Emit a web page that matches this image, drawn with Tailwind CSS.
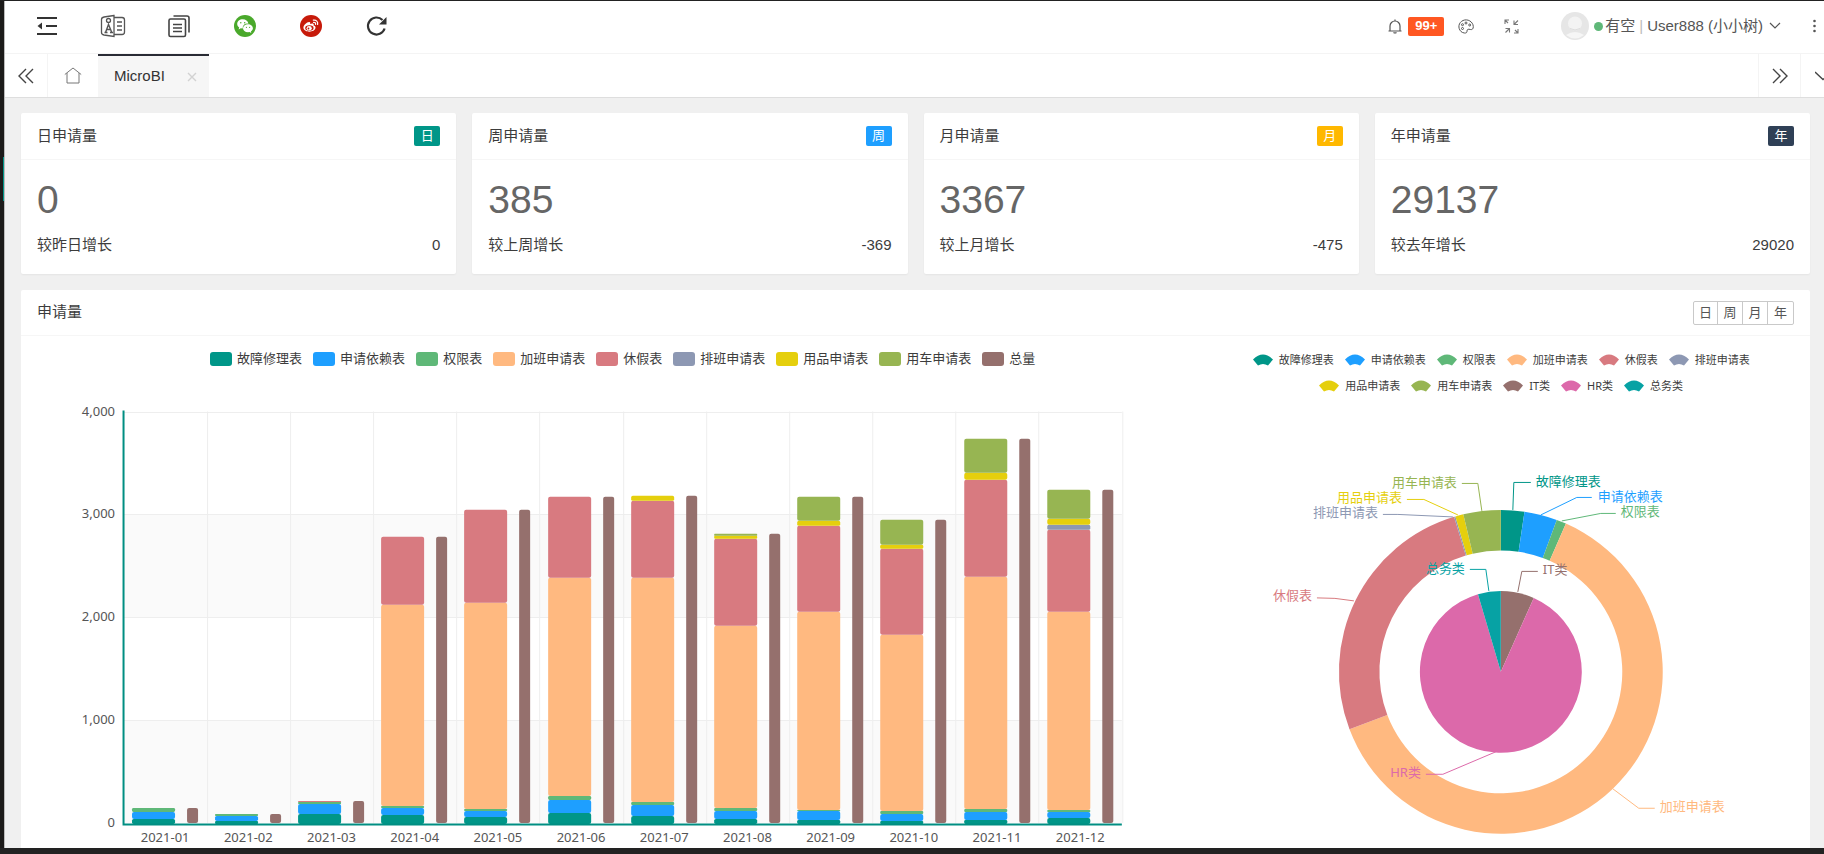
<!DOCTYPE html>
<html lang="zh-CN">
<head>
<meta charset="utf-8">
<title>MicroBI</title>
<script src="https://cdn.jsdelivr.net/npm/@tailwindcss/browser@4"></script>
</head>
<body class="flex h-screen overflow-hidden bg-[#222] pt-px pb-[6px] font-['Liberation_Sans','Noto_Sans_CJK_SC',sans-serif] text-[15px] text-[#3c3c3c]">
<aside class="relative w-1 shrink-0 bg-[#1c1b1a]"><div class="absolute top-[156px] right-0 h-11 w-px bg-[#009688]"></div></aside>
<div class="flex min-w-0 flex-1 flex-col overflow-hidden border-l border-[#bbb] bg-[#f0f0f0]">

  <header class="flex h-[52px] shrink-0 items-center justify-between bg-white pb-[2px]">
    <nav class="flex items-center pl-[9px] text-[#333]">
      <button class="flex w-[66px] justify-center" aria-label="收起菜单">
        <svg width="22" height="20" viewBox="0 0 22 20" fill="none" stroke="currentColor" stroke-width="2"><path d="M1 2h20M10 10h11M1 18h20"/><path d="M6 6.500v7L1.500 10z" fill="currentColor" stroke="none"/></svg>
      </button>
      <button class="flex w-[66px] justify-center text-[#555]" aria-label="通讯录">
        <svg width="26" height="24" viewBox="0 0 26 24" fill="none" stroke="currentColor" stroke-width="1.300"><path d="M14 1.500 4 3Q1.500 3.500 1.500 5.500v13Q1.500 20.500 4 21l10 1.500zM14 3.500h8q2.500 0 2.500 2.500v12q0 2.500-2.500 2.500h-8M17 8h5M17 12h5M17 16h5"/><circle cx="8.500" cy="6.500" r="2"/><path d="M4.500 18.500h3M10 18.500h3M5.500 18.500 8.500 10.500l3.300 8M6.500 15.500h4.500" stroke-width="1.400"/></svg>
      </button>
      <button class="flex w-[66px] justify-center text-[#444]" aria-label="文档">
        <svg width="24" height="24" viewBox="0 0 24 24" fill="none" stroke="currentColor" stroke-width="1.600"><rect x="2" y="5" width="16.500" height="17.500" rx="1.500"/><path d="M6.500 2H20q2 0 2 2v14.500M6 10.500h9M6 14h9M6 17.500h9"/></svg>
      </button>
      <button class="flex w-[66px] justify-center" aria-label="微信">
        <svg width="22" height="22" viewBox="0 0 22 22"><circle cx="11" cy="11" r="11" fill="#4aa92b"/><path d="M8.800 4.300c-3.200 0-5.600 2-5.600 4.700 0 1.500.8 2.700 2 3.600l-.6 1.800 2.200-1.100 1.900.3a4.500 4.500 0 0 1 5.700-4.900C14 6 11.600 4.300 8.800 4.300z" fill="#fff"/><path d="M14 9.300c-2.900 0-5 1.800-5 4s2.100 4 5 4l1.500-.2 1.800 1-.4-1.600c1.200-.8 2-1.900 2-3.200 0-2.200-2.200-4-4.900-4z" fill="#fff"/><g fill="#4aa92b"><circle cx="6.800" cy="7.800" r=".7"/><circle cx="10.700" cy="7.800" r=".7"/><circle cx="12.400" cy="12.300" r=".6"/><circle cx="15.600" cy="12.300" r=".6"/></g></svg>
      </button>
      <button class="flex w-[66px] justify-center" aria-label="微博">
        <svg width="22" height="22" viewBox="0 0 22 22"><circle cx="11" cy="11" r="11" fill="#c71a0a"/><path d="M9.300 7.100c1 .1 1.100.9.800 1.800 1.700-.7 3.500-.8 3.600.6 0 .4-.2.800-.1 1.100 1.100.3 2.200 1 1.900 2.500-.4 2.200-3.100 3.600-6.100 3.600-3.100 0-6-1.500-6-3.900 0-2.500 3.700-6 5.900-5.700z" fill="#fff"/><ellipse cx="9.400" cy="13" rx="4.200" ry="2.800" fill="#c71a0a"/><ellipse cx="9.200" cy="13.200" rx="2.600" ry="2.200" fill="#fff"/><circle cx="8.500" cy="13.500" r=".9" fill="#c71a0a"/><path d="M13.300 5.200c2.800-.6 5 1.500 4.300 4.300M13.600 7.300c1.300-.2 2.300.7 2 2" fill="none" stroke="#fff" stroke-width="1.200" stroke-linecap="round"/></svg>
      </button>
      <button class="flex w-[66px] justify-center" aria-label="刷新">
        <svg width="22" height="22" viewBox="0 0 22 22" fill="none" stroke="currentColor" stroke-width="2.200"><path d="M18.600 13.500A8.500 8.500 0 1 1 16.500 5"/><path d="M20.500 2v7.500h-7.500z" fill="currentColor" stroke="none"/></svg>
      </button>
    </nav>
    <div class="flex items-center text-[#555]">
      <button class="flex items-center gap-[6px]">
        <svg width="14" height="15" viewBox="0 0 14 15" fill="none" stroke="currentColor" stroke-width="1.200"><path d="M.5 12h13M2 12V7a5 5 0 0 1 10 0v5M7 2V.5M5.500 13.500q1.500 1 3 0"/></svg>
        <span class="flex h-[19px] w-9 items-center justify-center rounded-[2px] bg-[#ff5722] text-[13px] font-bold text-white">99+</span>
      </button>
      <button class="ml-[14px]" aria-label="主题">
        <svg width="16" height="15" viewBox="0 0 16 15" fill="none" stroke="currentColor" stroke-width="1"><path d="M3 12.500C-.5 9 .5 3.500 5 1.500c4.500-2 10 1 10.300 6 .2 2.500-1.500 3.500-3 3-2-.7-3.500-.2-3.300 1.700.1 1.300-.8 2-2.500 1.800-1.300-.1-2.500-.6-3.500-1.500z"/><circle cx="4.500" cy="9.500" r="1"/><circle cx="4.500" cy="5.700" r="1"/><circle cx="8" cy="4" r="1"/><circle cx="11.700" cy="6" r="1"/></svg>
      </button>
      <button class="ml-[30px]" aria-label="退出全屏">
        <svg width="15" height="15" viewBox="0 0 15 15" fill="none" stroke="#777" stroke-width="1.100"><path d="M1 5V1h4M10 1.500v4h4M14 1.500l-4 4M1.500 9.500h4v4M5.500 9.500l-4 4M14 10v4h-4M1 1l3 3M11 11l3 3"/></svg>
      </button>
      <button class="ml-[42px] flex items-center">
        <svg width="28" height="28" viewBox="0 0 28 28"><circle cx="14" cy="14" r="14" fill="#e6e6e6"/><circle cx="14" cy="11.500" r="7" fill="#f3f3f3"/><path d="M5 23q9-6 18 0-9 7-18 0z" fill="#f6f6f6"/><path d="M9 16.500q5 3 10 0" stroke="#dcdcdc" fill="none"/></svg>
        <span class="ml-[5px] size-[9px] rounded-full bg-[#5fb878]"></span>
        <span class="ml-[2px]">有空</span><span class="mx-1 text-[#bbb]">|</span><span>User888 (小小树)</span>
        <svg class="ml-[6px]" width="12" height="8" viewBox="0 0 12 8" fill="none" stroke="currentColor" stroke-width="1.200"><path d="m1 1 5 5 5-5"/></svg>
      </button>
      <button class="mr-2 ml-8" aria-label="更多">
        <svg width="3" height="14" viewBox="0 0 3 14" fill="currentColor"><circle cx="1.500" cy="2" r="1.300"/><circle cx="1.500" cy="7" r="1.300"/><circle cx="1.500" cy="12" r="1.300"/></svg>
      </button>
    </div>
  </header>

  <div class="flex h-[45px] shrink-0 border-t border-b border-t-[#f4f4f4] border-b-[#dedede] bg-white">
    <button class="flex w-[43px] items-center justify-center border-r border-[#f4f4f4] text-[#444]" aria-label="向左">
      <svg width="16" height="16" viewBox="0 0 16 16" fill="none" stroke="currentColor" stroke-width="1.400"><path d="M8 1 1 8l7 7M15 1 8 8l7 7"/></svg>
    </button>
    <button class="flex w-[50px] items-center justify-center text-[#777]" aria-label="首页">
      <svg width="18" height="17" viewBox="0 0 18 17" fill="none" stroke="currentColor" stroke-width="1"><path d="M.8 7.500 9 1l8.200 6.500M3 6v10h12V6"/></svg>
    </button>
    <div class="flex w-[111px] items-center justify-between border-t-2 border-[#292b34] bg-[#f6f6f6] pr-[12px] pl-4">
      <a href="#" class="text-[#333]">MicroBI</a>
      <button class="text-[#d2d2d2]" aria-label="关闭"><svg width="10" height="10" viewBox="0 0 10 10" stroke="currentColor" stroke-width="1.400"><path d="m1 1 8 8M9 1 1 9"/></svg></button>
    </div>
    <button class="ml-auto flex w-[43px] items-center justify-center border-x border-[#f4f4f4] text-[#444]" aria-label="向右">
      <svg width="16" height="16" viewBox="0 0 16 16" fill="none" stroke="currentColor" stroke-width="1.400"><path d="m1 1 7 7-7 7M8 1l7 7-7 7"/></svg>
    </button>
    <button class="flex w-[23px] items-center justify-end overflow-hidden text-[#444]" aria-label="标签操作">
      <svg width="9" height="10" viewBox="0 0 9 10" fill="none" stroke="currentColor" stroke-width="1.400"><path d="m0 1 8 7.500 1-1"/></svg>
    </button>
  </div>

  <main class="flex flex-col gap-4 pt-[15px] pr-[14px] pl-4">
    <section class="grid grid-cols-4 gap-4">
      <article class="rounded-[2px] bg-white shadow-[0_1px_2px_rgba(0,0,0,0.05)]">
        <div class="flex h-[47px] items-center justify-between border-b border-[#f6f6f6] px-4"><h2>日申请量</h2><span class="flex h-5 w-[26px] items-center justify-center rounded-[2px] bg-[#009688] text-[13px] text-white">日</span></div>
        <div class="px-4 pt-5 pb-4"><p class="text-[39px] leading-10 text-[#666]">0</p><p class="mt-3 flex h-[26px] items-center justify-between"><span>较昨日增长</span><span>0</span></p></div>
      </article>
      <article class="rounded-[2px] bg-white shadow-[0_1px_2px_rgba(0,0,0,0.05)]">
        <div class="flex h-[47px] items-center justify-between border-b border-[#f6f6f6] px-4"><h2>周申请量</h2><span class="flex h-5 w-[26px] items-center justify-center rounded-[2px] bg-[#1e9fff] text-[13px] text-white">周</span></div>
        <div class="px-4 pt-5 pb-4"><p class="text-[39px] leading-10 text-[#666]">385</p><p class="mt-3 flex h-[26px] items-center justify-between"><span>较上周增长</span><span>-369</span></p></div>
      </article>
      <article class="rounded-[2px] bg-white shadow-[0_1px_2px_rgba(0,0,0,0.05)]">
        <div class="flex h-[47px] items-center justify-between border-b border-[#f6f6f6] px-4"><h2>月申请量</h2><span class="flex h-5 w-[26px] items-center justify-center rounded-[2px] bg-[#ffb800] text-[13px] text-white">月</span></div>
        <div class="px-4 pt-5 pb-4"><p class="text-[39px] leading-10 text-[#666]">3367</p><p class="mt-3 flex h-[26px] items-center justify-between"><span>较上月增长</span><span>-475</span></p></div>
      </article>
      <article class="rounded-[2px] bg-white shadow-[0_1px_2px_rgba(0,0,0,0.05)]">
        <div class="flex h-[47px] items-center justify-between border-b border-[#f6f6f6] px-4"><h2>年申请量</h2><span class="flex h-5 w-[26px] items-center justify-center rounded-[2px] bg-[#2f4056] text-[13px] text-white">年</span></div>
        <div class="px-4 pt-5 pb-4"><p class="text-[39px] leading-10 text-[#666]">29137</p><p class="mt-3 flex h-[26px] items-center justify-between"><span>较去年增长</span><span>29020</span></p></div>
      </article>
    </section>

    <section class="rounded-[2px] bg-white">
      <div class="flex h-[46px] items-center justify-between border-b border-[#f6f6f6] px-4">
        <h2>申请量</h2>
        <div class="flex divide-x divide-[#c9c9c9] rounded-[2px] border border-[#c9c9c9] text-[13px] text-[#555]">
          <button class="h-[22px] w-6">日</button><button class="h-[22px] w-[25px]">周</button><button class="h-[22px] w-[25px]">月</button><button class="h-[22px] w-[25px]">年</button>
        </div>
      </div>
      <div class="grid grid-cols-3 px-4 font-['Noto_Sans','Noto_Sans_CJK_SC',sans-serif]">
        <div class="col-span-2 pt-3">
          <div id="barLegend" class="mb-px flex h-5 justify-center gap-[11px] text-[13px]"></div>
          <svg id="bar" class="w-full overflow-visible" viewBox="0 0 1171 490" role="img" aria-label="各月申请量"></svg>
        </div>
        <div class="pt-[11px]">
          <div id="pieLegend1" class="flex h-[26px] justify-center gap-[11px] text-[11px]"></div>
          <div id="pieLegend2" class="flex h-[26px] justify-center gap-[11px] text-[11px]"></div>
          <svg id="pie" class="w-full overflow-visible" viewBox="0 0 586 452" role="img" aria-label="申请类型占比"></svg>
        </div>
      </div>
    </section>
  </main>
</div>

<script>
const C = {
  '故障修理表': '#009688', '申请依赖表': '#1e9fff', '权限表': '#5fb878', '加班申请表': '#ffb980',
  '休假表': '#d87a80', '排班申请表': '#8d98b3', '用品申请表': '#e5cf0d', '用车申请表': '#97b552',
  '总量': '#95706d', 'IT类': '#95706d', 'HR类': '#dc69aa', '总务类': '#07a2a4'
};
const names = Object.keys(C);

// Legends
document.getElementById('barLegend').innerHTML = names.slice(0, 9).map(n =>
  `<button class="flex items-center gap-[5px] whitespace-nowrap"><span class="mt-[2px] h-[14px] w-[22px] rounded-[3px]" style="background:${C[n]}"></span><span class="leading-4">${n}</span></button>`).join('');
const fan = n => `<button class="flex items-center gap-[6px] whitespace-nowrap"><svg width="20" height="12" viewBox="0 0 20 12"><path d="M0 5.500Q10-4.500 20 5.500L15 11.500Q10 8.500 5 11.500z" fill="${C[n]}"/></svg><span class="leading-4">${n}</span></button>`;
document.getElementById('pieLegend1').innerHTML = names.slice(0, 6).map(fan).join('');
document.getElementById('pieLegend2').innerHTML = ['用品申请表', '用车申请表', 'IT类', 'HR类', '总务类'].map(fan).join('');

// Stacked bars: cumulative height of each series, in chart units
const X0 = 86.5, Y0 = 454, H = 411.5, W = 83.17;
const stacks = [
  [5, 12, 16], [3, 8, 10], [10, 20, 22, 22, 23],
  [9, 16, 18, 219, 287], [7, 13, 15, 221, 314], [11, 24, 28, 246, 327],
  [8, 19, 22, 246, 323, 323, 328], [5, 13, 16, 198, 285, 285, 288, 290],
  [4, 13, 14, 212, 298, 298, 303, 327], [3, 10, 13, 189, 275, 275, 279, 304],
  [4, 12, 15, 247, 344, 344, 351, 385], [6, 12, 14, 212, 294, 299, 305, 334]
];
let s = '';
for (let i = 0; i < 4; i++) {
  const y = Y0 - (i + 1) * H / 4;
  if (i % 2 === 0) s += `<rect x="${X0}" y="${y}" width="${W * 12}" height="${H / 4}" fill="#fafafa"/>`;
}
for (let i = 1; i <= 4; i++) s += `<path d="M${X0} ${Math.round(Y0 - i * H / 4) + .5}h${W * 12}" stroke="#eee"/>`;
for (let i = 1; i <= 12; i++) s += `<path d="M${Math.round(X0 + i * W) + .5} ${Y0 - H}v${H}" stroke="#eee"/>`;
const B = Y0 + .8;
stacks.forEach((st, i) => {
  const x = Math.round(X0 + i * W + 8.3);
  let prev = 0;
  st.forEach((h, k) => {
    if (h > prev) s += `<rect x="${x}" y="${B - h}" width="43" height="${h - prev}" rx="${Math.min(2, (h - prev) / 3)}" fill="${C[names[k]]}"/>`;
    prev = h;
  });
  s += `<rect x="${x + 55}" y="${B - prev}" width="11" height="${prev - 1}" rx="2" fill="${C['总量']}"/>`;
  s += `<text x="${X0 + (i + .5) * W}" y="473" text-anchor="middle">2021-${String(i + 1).padStart(2, '0')}</text>`;
});
['0', '1,000', '2,000', '3,000', '4,000'].forEach((t, i) => {
  s += `<text x="78" y="${Y0 - i * H / 4 + 4}" text-anchor="end">${t}</text>`;
});
s += `<path d="M${X0} ${Y0 - H - 1}V${Y0 + 1.5}H${X0 + W * 12}" fill="none" stroke="#008e82" stroke-width="2"/>`;
document.getElementById('bar').innerHTML = `<g font-size="13" fill="#555">${s}</g>`;

// Ring and inner pie
const CX = 293, CY = 273;
const pt = (r, a) => { const t = a * Math.PI / 180; return `${(CX + r * Math.sin(t)).toFixed(2)} ${(CY - r * Math.cos(t)).toFixed(2)}`; };
const arc = (n, a, b, R, r) => {
  const big = b - a > 180 ? 1 : 0;
  const inner = r ? `L${pt(r, b)}A${r} ${r} 0 ${big} 0 ${pt(r, a)}` : `L${CX} ${CY}`;
  return `<path d="M${pt(R, a)}A${R} ${R} 0 ${big} 1 ${pt(R, b)}${inner}z" fill="${C[n]}"/>`;
};
let p = '';
[['故障修理表', 0, 8.4], ['申请依赖表', 8.4, 20.2], ['权限表', 20.2, 23.7], ['加班申请表', 23.7, 249.2],
 ['休假表', 249.2, 343.2], ['排班申请表', 343.2, 343.7], ['用品申请表', 343.7, 346.6], ['用车申请表', 346.6, 360]]
  .forEach(([n, a, b]) => p += arc(n, a, b, 162, 121.5));
[['IT类', 0, 24], ['HR类', 24, 343.6], ['总务类', 343.6, 360]].forEach(([n, a, b]) => p += arc(n, a, b, 81, 0));
// name, leader line points, label x, label baseline, anchor
[
  ['故障修理表', '305,111 306,83.5 323,83.5', 328, 87, 'start'],
  ['申请依赖表', '333,116 369,98.5 384,98.5', 390, 102, 'start'],
  ['权限表', '354,122 393,114.5 408,114.5', 413, 117, 'start'],
  ['用车申请表', '274,112 270,84.5 254,84.5', 249, 88, 'end'],
  ['用品申请表', '250,116 216,100.5 199,100.5', 194, 103, 'end'],
  ['排班申请表', '245,118 190,115.5 175,115.5', 170, 118, 'end'],
  ['休假表', '146,202 127,199.5 109,199', 104, 201, 'end'],
  ['加班申请表', '405,390 431,409.5 447,409.5', 452, 412, 'start'],
  ['IT类', '310,193 314,172.5 330,172.5', 335, 175, 'start'],
  ['总务类', '281,192 278,170.5 262,170.5', 257, 174, 'end'],
  ['HR类', '288,353 235,375.5 218,375.5', 213, 378, 'end']
].forEach(([n, l, x, y, a]) => {
  p += `<polyline points="${l}" fill="none" stroke="${C[n]}"/><text x="${x}" y="${y}" text-anchor="${a}" fill="${C[n]}">${n}</text>`;
});
document.getElementById('pie').innerHTML = `<g font-size="13">${p}</g>`;
</script>
</body>
</html>
